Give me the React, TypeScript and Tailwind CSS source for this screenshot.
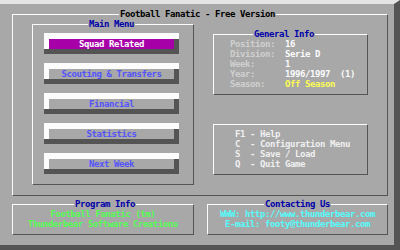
import React from "react";

const font = "font-['DejaVu_Sans_Mono',_'Liberation_Mono',_monospace] font-bold text-[9px] tracking-[-0.42px] leading-[10px]";

function Frame({
  title,
  titleLeft,
  titleColor = "text-[#0000a8]",
  className = "",
  children,
}: {
  title: string;
  titleLeft: string;
  titleColor?: string;
  className?: string;
  children?: React.ReactNode;
}) {
  return (
    <div
      className={`relative border border-t-[#fcfcfc] border-l-[#fcfcfc] border-r-[#545454] border-b-[#545454] ${className}`}
    >
      <span
        className={`absolute top-[-6px] ${titleLeft} bg-[#a8a8a8] px-[1px] whitespace-pre ${titleColor}`}
      >
        {title}
      </span>
      {children}
    </div>
  );
}

function MenuButton({ label, selected }: { label: string; selected?: boolean }) {
  return (
    <div className="flex flex-col w-[135px] h-[21px]">
      <div className="h-[6px] bg-[#fcfcfc]" />
      <div className="flex h-[10px]">
        <div className="w-[5px] bg-[#fcfcfc]" />
        <div
          className={`w-[125px] flex items-center justify-center whitespace-pre ${
            selected ? "bg-[#a800a8] text-[#fcfcfc]" : "bg-[#a8a8a8] text-[#5454fc]"
          }`}
        >
          {label}
        </div>
        <div className="w-[5px] bg-[#545454]" />
      </div>
      <div className="h-[5px] bg-[#545454]" />
    </div>
  );
}

function InfoRow({ label, value, valueColor = "text-[#fcfcfc]" }: { label: string; value: string; valueColor?: string }) {
  return (
    <div className="flex whitespace-pre">
      <span className="w-[55px] text-[#d0d0d0]">{label}</span>
      <span className={valueColor}>{value}</span>
    </div>
  );
}

export default function App() {
  return (
    <div
      className={`w-[400px] h-[250px] bg-[#a8a8a8] border-t-4 border-t-[#e4e4e4] border-r-[6px] border-r-[#545454] border-b-[5px] border-b-[#545454] flex flex-col ${font}`}
    >
      <Frame
        title="Football Fanatic - Free Version"
        titleLeft="left-[106px]"
        titleColor="text-black"
        className="mt-[10px] ml-[12px] w-[376px] h-[182px] flex"
      >
        <Frame
          title="Main Menu"
          titleLeft="left-[55px]"
          className="ml-[19px] mt-[9px] w-[162px] h-[161px] flex flex-col gap-[9px] pt-[8px] pl-[11px]"
        >
          <MenuButton label="Squad Related" selected />
          <MenuButton label="Scouting & Transfers" />
          <MenuButton label="Financial" />
          <MenuButton label="Statistics" />
          <MenuButton label="Next Week" />
        </Frame>
        <div className="ml-[19px] mt-[19px] flex flex-col gap-[29px]">
          <Frame
            title="General Info"
            titleLeft="left-[39px]"
            className="w-[155px] h-[61px] pl-[16px] pt-[4px]"
          >
            <InfoRow label="Position:" value="16" />
            <InfoRow label="Division:" value="Serie D" />
            <InfoRow label="Week:" value="1" />
            <InfoRow label="Year:" value="1996/1997  (1)" />
            <InfoRow label="Season:" value="Off Season" valueColor="text-[#fcfc54]" />
          </Frame>
          <div className="relative w-[155px] h-[51px] border border-t-[#fcfcfc] border-l-[#fcfcfc] border-r-[#545454] border-b-[#545454] pl-[21px] pt-[4px] text-[#f0f0f0] whitespace-pre">
            <div>F1 - Help</div>
            <div>C  - Configuration Menu</div>
            <div>S  - Save / Load</div>
            <div>Q  - Quit Game</div>
          </div>
        </div>
      </Frame>
      <div className="flex mt-[8px] ml-[12px]">
        <Frame
          title="Program Info"
          titleLeft="left-[61px]"
          className="w-[182px] h-[31px] pt-[4px] text-center text-[#54fc54] whitespace-pre"
        >
          <div>Football Fanatic (tm)</div>
          <div>Thunderbear Software Creations</div>
        </Frame>
        <Frame
          title="Contacting Us"
          titleLeft="left-[56px]"
          className="ml-[13px] w-[181px] h-[31px] pt-[4px] text-center text-[#54fcfc] whitespace-pre"
        >
          <div>WWW: http://www.thunderbear.com</div>
          <div>E-mail: footy@thunderbear.com</div>
        </Frame>
      </div>
    </div>
  );
}
